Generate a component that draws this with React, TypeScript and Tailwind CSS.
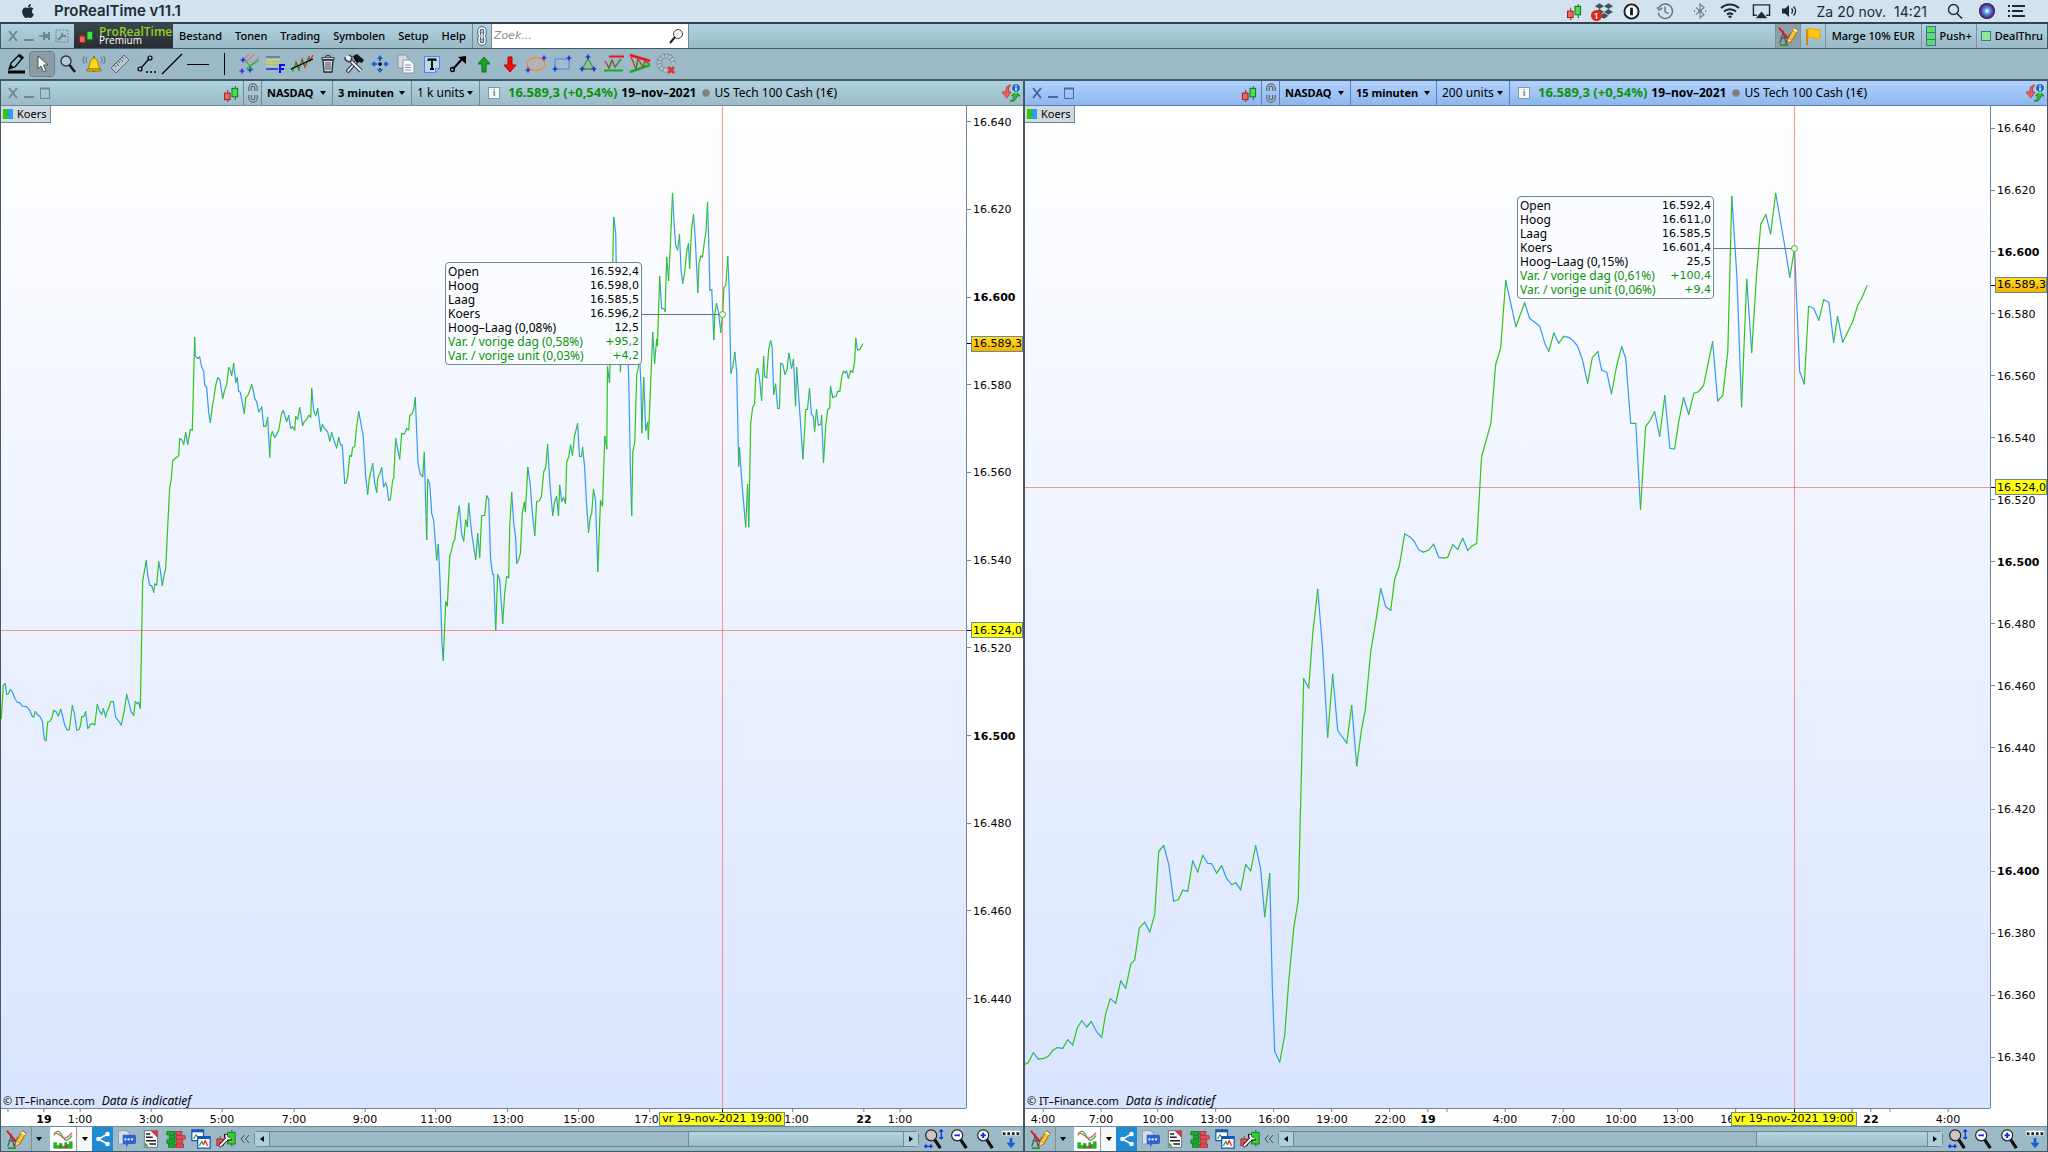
import type { ReactNode } from 'react';
import { FaApple, FaDropbox } from 'react-icons/fa';

// ---------- types ----------

type Block = { x: number; y: number; sx: number; sy: number; ticks: string };

type Scale = { max: number; min: number };

type TimeTick = { x: number; label?: string; bold?: boolean };

type InfoRow = { label: string; value: string; up?: boolean };

type ChartConfig = {
  id: string;
  active: boolean;
  titleGap: string;
  period: string;
  periodWidth: string;
  units: string;
  unitsWidth: string;
  scale: Scale;
  prices: number[];
  times: TimeTick[];
  blocks: Block[];
  cursor: { x: number; y: number };
  info: InfoRow[];
  scrollBefore: number;
  scrollThumb: number;
};

const PLOT_W = 965;
const PLOT_H = 1002;
const LAST_PRICE = 589.3;
const CURSOR_PRICE = 524;

// ---------- data ----------

const NASDAQ_3M: Block[] = [
  {
    x: -1,
    y: 214,
    sx: 3,
    sy: 3,
    ticks:
      '4,1195 10,1096 16,1091 20,1123 25,1121 31,1109 38,1118 45,1136 52,1147 59,1148 66,1158 80,1160 90,1172 96,1188 101,1191 106,1175 112,1183 120,1190 127,1203 133,1257 138,1262 143,1207 150,1203 155,1196 161,1171 169,1176 175,1188 182,1168 188,1190 194,1215 202,1230 208,1230 217,1157 223,1178 230,1230 236,1230 241,1219 245,1190 251,1190 257,1175 263,1225 268,1221 271,1213 278,1211 284,1215 292,1154 298,1172 305,1183 310,1166 317,1191 320,1176 326,1165 332,1145 340,1145 347,1192 355,1202 364,1215 373,1171 380,1124 387,1150 393,1174 401,1186 406,1145 412,1151 416,1147 421,1165 428,782 439,722 443,766 449,796 455,797 461,817 464,792 470,795 476,725 481,750 487,796 492,766 497,745 503,620 509,502 514,477 518,423 524,416 536,407 539,356 545,359 551,373 557,338 563,373 571,329 577,330 584,53 586,109 593,115 599,111 605,141 611,154 614,194 620,203 626,278 631,307 638,252 641,237 647,196 653,173 659,178 662,195 668,235 674,210 680,194 686,143 691,149 695,166 701,131 707,187 712,173 716,214 721,217 727,248 733,280 737,233 743,227 749,212 755,194 761,216 764,236 770,245 776,276 785,261 791,319 797,319 803,293 809,411 812,352 817,335 824,352 830,343 836,330 845,279 850,272 860,304 866,287 872,325 878,321 884,330 887,290 893,298 899,263 908,316 914,304 920,298 926,286 932,291 935,206 941,272 947,287 953,266 962,334 967,314 976,328 983,336 989,363 995,338 1003,364 1010,384 1016,353 1022,375 1027,375 1034,490 1038,489 1043,470 1049,407 1054,409 1058,382 1064,380 1070,318 1076,275 1083,312 1090,350 1097,470 1103,523 1108,475 1118,431 1124,490 1130,517 1133,475 1139,462 1145,443 1151,500 1157,489 1161,500 1166,541 1171,539 1178,480 1181,475 1187,356 1193,388 1199,417 1205,340 1213,342 1220,326 1226,329 1229,287 1236,281 1241,268 1246,233 1254,430 1261,463 1268,470 1273,398 1280,658 1283,478 1289,490 1295,580 1301,602 1310,720 1315,673 1320,780 1326,970 1330,1021 1337,846 1342,857 1349,709 1355,690 1359,668 1364,660 1370,610 1378,558 1385,643 1391,663 1397,600 1402,619 1406,550 1415,640 1427,718 1433,641 1439,712 1445,587 1454,586 1460,527 1466,538 1472,722 1478,763 1481,764 1487,931 1493,764 1499,779 1508,910 1514,820 1520,770 1526,773 1529,620 1535,518 1541,610 1547,655 1550,730 1555,722',
  },
  {
    x: 419,
    y: 74,
    sx: 2.57,
    sy: 3,
    ticks:
      '258,1120 263,1000 268,967 271,995 277,862 283,910 289,1005 295,1066 300,964 306,963 312,950 318,876 323,862 328,794 334,915 341,1006 346,965 351,950 356,1006 359,916 364,964 369,953 374,970 377,846 382,832 387,795 392,826 397,768 405,731 410,829 415,829 418,802 423,860 428,968 433,1057 438,1010 441,1003 446,928 451,960 457,1174 464,962 469,978 475,769 480,806 482,560 487,607 490,500 498,112 503,160 505,300 511,400 515,575 522,390 533,480 537,620 541,880 544,1006 547,815 552,785 557,585 565,540 568,620 570,758 575,593 580,750 585,728 587,778 593,610 598,458 603,550 608,478 610,497 616,290 621,385 627,386 630,394 634,232 639,301 644,180 649,40 653,130 657,195 662,210 667,164 671,270 675,310 680,280 686,210 690,191 693,265 698,145 703,103 708,190 714,337 717,250 722,228 726,231 731,185 735,155 739,67 742,180 745,331 750,329 755,478 758,400 762,371 767,395 773,457 776,420 778,404 781,322 786,316 791,230 795,340 799,579 804,560 809,517 814,575 819,858 821,803 828,920 837,1040 842,914 845,1040 850,730 855,681 860,671 863,583 868,565 873,600 878,661 883,530 886,590 891,593 896,510 901,482 905,500 909,643 914,612 919,685 924,685 927,550 932,552 938,583 943,570 948,520 955,565 960,538 965,677 968,563 975,680 984,836 989,740 991,689 996,688 1001,626 1006,703 1011,710 1014,754 1019,689 1024,736 1030,733 1032,706 1037,847 1043,735 1048,688 1053,685 1055,619 1061,653 1070,648 1073,634 1079,634 1084,590 1088,574 1093,578 1096,573 1101,595 1107,572 1112,577 1117,545 1120,476 1124,509 1130,509 1138,492',
  },
];

const NASDAQ_15M: Block[] = [
  {
    x: -5,
    y: 354,
    sx: 3,
    sy: 2.529,
    ticks:
      '15,1528 25,1524 40,1499 55,1515 73,1513 85,1508 98,1493 112,1486 128,1488 143,1466 158,1480 172,1436 185,1418 200,1434 214,1420 230,1446 245,1460 257,1400 271,1362 287,1374 302,1317 317,1336 332,1275 344,1264 358,1183 374,1169 389,1194 404,1150 416,990 431,975 446,1022 461,1116 475,1112 488,1088 503,1091 518,1014 533,1042 548,1000 563,1020 575,1021 590,1045 605,1026 620,1059 635,1074 647,1069 662,1087 677,1023 692,1039 707,975 722,1035 734,1155 749,1046 757,1330 764,1496 779,1523 794,1455 806,1320 821,1185 835,1112 851,553 866,577 878,440 893,327 908,480 923,701 938,542 953,684 980,716 995,621 1010,774 1024,685 1036,632 1052,485 1068,405 1082,325 1097,371 1112,380 1124,301 1138,268 1154,187 1169,194 1183,206 1196,227 1210,233 1226,228 1241,213 1256,246 1270,248 1283,246 1298,214 1313,226 1328,198 1343,228 1357,217 1370,211 1384,2',
  },
  {
    x: 455,
    y: 74,
    sx: 2.76,
    sy: 3,
    ticks:
      '5,828 30,730 43,555 57,503 71,301 99,440 123,368 137,415 165,439 179,491 190,514 204,459 217,490 231,469 245,472 257,482 269,498 283,540 297,610 310,533 325,515 336,571 350,577 363,642 377,558 391,500 402,535 416,730 430,730 443,988 457,739 470,721 482,695 496,769 510,647 524,805 537,807 548,727 562,653 576,703 590,640 603,635 617,616 642,485 656,663 670,646 684,515 695,49 709,290 722,680 736,298 750,517 763,290 775,132 789,104 802,162 816,40 842,204 855,292 868,207 882,574 895,612 907,379 921,385 935,421 949,359 963,367 976,487 987,410 1001,487 1028,426 1043,375 1054,354 1068,317',
  },
];

const CHARTS: ChartConfig[] = [
  {
    id: 'left',
    active: false,
    titleGap: 'ml-[172px]',
    period: '3 minuten',
    periodWidth: 'w-[79px]',
    units: '1 k units',
    unitsWidth: 'w-[68px]',
    scale: { max: 643.56, min: 415.05 },
    prices: [640, 620, 600, 580, 560, 540, 520, 500, 480, 460, 440],
    times: [
      { x: 7 },
      { x: 43, label: '19', bold: true },
      { x: 79, label: '1:00' },
      { x: 150, label: '3:00' },
      { x: 221, label: '5:00' },
      { x: 293, label: '7:00' },
      { x: 364, label: '9:00' },
      { x: 435, label: '11:00' },
      { x: 507, label: '13:00' },
      { x: 578, label: '15:00' },
      { x: 649, label: '17:00' },
      { x: 792, label: '21:00' },
      { x: 863, label: '22', bold: true },
      { x: 899, label: '1:00' },
    ],
    blocks: NASDAQ_3M,
    cursor: { x: 721, y: 208 },
    info: [
      { label: 'Open', value: '16.592,4' },
      { label: 'Hoog', value: '16.598,0' },
      { label: 'Laag', value: '16.585,5' },
      { label: 'Koers', value: '16.596,2' },
      { label: 'Hoog–Laag (0,08%)', value: '12,5' },
      { label: 'Var. / vorige dag (0,58%)', value: '+95,2', up: true },
      { label: 'Var. / vorige unit (0,03%)', value: '+4,2', up: true },
    ],
    scrollBefore: 66,
    scrollThumb: 34,
  },
  {
    id: 'right',
    active: true,
    titleGap: 'ml-[166px]',
    period: '15 minuten',
    periodWidth: 'w-[86px]',
    units: '200 units',
    unitsWidth: 'w-[73px]',
    scale: { max: 647.14, min: 323.6 },
    prices: [640, 620, 600, 580, 560, 540, 520, 500, 480, 460, 440, 420, 400, 380, 360, 340],
    times: [
      { x: 18, label: '4:00' },
      { x: 76, label: '7:00' },
      { x: 133, label: '10:00' },
      { x: 191, label: '13:00' },
      { x: 249, label: '16:00' },
      { x: 307, label: '19:00' },
      { x: 365, label: '22:00' },
      { x: 403, label: '19', bold: true },
      { x: 422 },
      { x: 480, label: '4:00' },
      { x: 538, label: '7:00' },
      { x: 596, label: '10:00' },
      { x: 653, label: '13:00' },
      { x: 711, label: '16:00' },
      { x: 827 },
      { x: 846, label: '22', bold: true },
      { x: 865 },
      { x: 923, label: '4:00' },
    ],
    blocks: NASDAQ_15M,
    cursor: { x: 769, y: 142 },
    info: [
      { label: 'Open', value: '16.592,4' },
      { label: 'Hoog', value: '16.611,0' },
      { label: 'Laag', value: '16.585,5' },
      { label: 'Koers', value: '16.601,4' },
      { label: 'Hoog–Laag (0,15%)', value: '25,5' },
      { label: 'Var. / vorige dag (0,61%)', value: '+100,4', up: true },
      { label: 'Var. / vorige unit (0,06%)', value: '+9,4', up: true },
    ],
    scrollBefore: 73,
    scrollThumb: 27,
  },
];

// ---------- helpers ----------

function toPoints(blocks: Block[]) {
  return blocks.flatMap((b) =>
    b.ticks.split(' ').map((tick) => {
      const [x, y] = tick.split(',').map(Number);
      return { x: b.x + x / b.sx, y: b.y + y / b.sy };
    })
  );
}

// Rising segments and falling segments get their own path
function toPaths(blocks: Block[]) {
  const pts = toPoints(blocks);
  let up = '';
  let down = '';
  for (let i = 1; i < pts.length; i++) {
    const a = pts[i - 1];
    const b = pts[i];
    const seg = `M${a.x.toFixed(1)} ${a.y.toFixed(1)}L${b.x.toFixed(1)} ${b.y.toFixed(1)}`;
    if (b.y <= a.y) up += seg;
    else down += seg;
  }
  return { up, down };
}

const priceTop = (scale: Scale, value: number) => `${((scale.max - value) / (scale.max - scale.min)) * 100}%`;
const timeLeft = (x: number) => `${(x / PLOT_W) * 100}%`;

// ---------- icons ----------

function Icon({ children, size = 24, box = 24 }: { children: ReactNode; size?: number; box?: number }) {
  return (
    <svg width={size} height={size} viewBox={`0 0 ${box} ${box}`} fill="none" className="shrink-0" aria-hidden="true">
      {children}
    </svg>
  );
}

function Candles({ size = 18 }: { size?: number }) {
  return (
    <Icon size={size} box={18}>
      <path d="M5 5v13" stroke="#a01c1c" />
      <rect x="1.5" y="8.500" width="6" height="7" fill="#ee6666" stroke="#a01c1c" />
      <path d="M13 1v15" stroke="#0c6b1c" />
      <rect x="9.500" y="3.500" width="6" height="9" fill="#4be04b" stroke="#0c6b1c" />
    </Icon>
  );
}

function Chain({ open }: { open?: boolean }) {
  return (
    <svg width="12" height="20" viewBox="0 0 12 20" fill="none" aria-hidden="true">
      <path d={open ? 'M3 8V5a3 3 0 0 1 6 0v3' : 'M3 7V5a3 3 0 0 1 6 0v2a3 3 0 0 1-6 0z'} stroke="#4b5d69" strokeWidth="3.500" />
      <path d={open ? 'M3 12v3a3 3 0 0 0 6 0v-3' : 'M3 13v2a3 3 0 0 0 6 0v-2a3 3 0 0 0-6 0z'} stroke="#4b5d69" strokeWidth="3.500" />
      <path d={open ? 'M3 8V5a3 3 0 0 1 6 0v3' : 'M3 7V5a3 3 0 0 1 6 0v2a3 3 0 0 1-6 0z'} stroke={open ? '#a9b9c2' : '#fff'} strokeWidth="1.500" />
      <path d={open ? 'M3 12v3a3 3 0 0 0 6 0v-3' : 'M3 13v2a3 3 0 0 0 6 0v-2a3 3 0 0 0-6 0z'} stroke={open ? '#a9b9c2' : '#fff'} strokeWidth="1.500" />
      {!open && <path d="M6 6v8" stroke="#4b5d69" strokeWidth="3" />}
      {!open && <path d="M6 6.500v7" stroke="#fff" strokeWidth="1.500" />}
    </svg>
  );
}

function Caret() {
  return (
    <svg width="6" height="4" viewBox="0 0 6 4" aria-hidden="true">
      <path d="M0 0h6L3 4z" fill="#000" />
    </svg>
  );
}

function DrawIcon() {
  return (
    <Icon size={22}>
      <path d="M3 22h9" stroke="#19a32a" strokeWidth="2" />
      <path d="M3 20 7 8l3 12 4-10M4 14h8" stroke="#4a5560" strokeWidth="1.300" />
      <path d="m2 3 11 13" stroke="#e01414" strokeWidth="2" />
      <path d="m11 20 1.500-6L19 3l4 2.300L16.500 17z" fill="#fbc42d" stroke="#9b6a12" />
      <path d="m12.500 14 4 3L11 20z" fill="#f8e3b6" stroke="#9b6a12" strokeWidth=".7" />
      <path d="m18 4.500 4 2.500" stroke="#fff" strokeWidth="1.500" />
    </Icon>
  );
}

function Cross({ points }: { points: [number, number][] }) {
  return <path d={points.map(([x, y]) => `M${x - 2.5} ${y}h5M${x} ${y - 2.5}v5`).join('')} stroke="#0a12e6" strokeWidth="1.200" />;
}

function WindowControls({ color, full }: { color: string; full?: boolean }) {
  return (
    <div className={`flex items-center gap-1 pl-1.5 ${color}`}>
      <button type="button" aria-label="Sluiten">
        <Icon size={12} box={12}>
          <path d="m2 1 8 10M10 1 2 11" stroke="currentColor" strokeWidth="2" />
        </Icon>
      </button>
      <button type="button" aria-label="Minimaliseren">
        <Icon size={12} box={12}>
          <path d="M1 10h10" stroke="currentColor" strokeWidth="2" />
        </Icon>
      </button>
      {full ? (
        <>
          <button type="button" aria-label="Vastzetten">
            <Icon size={12} box={12}>
              <path d="M0 6h5" stroke="currentColor" strokeWidth="1.500" />
              <path d="M4 2h2v2h3V2h2v8H9V8H6v2H4z" fill="currentColor" />
            </Icon>
          </button>
          <button type="button" aria-label="Voorkeuren">
            <Icon size={14} box={14}>
              <rect x="1" y="1" width="12" height="12" stroke="currentColor" strokeDasharray="2 1" />
              <path d="m3 11 5-5" stroke="currentColor" strokeWidth="2" />
              <path d="M7 4a2.500 2.500 0 0 0 4 2.500" stroke="currentColor" strokeWidth="2" />
            </Icon>
          </button>
        </>
      ) : (
        <button type="button" aria-label="Maximaliseren">
          <Icon size={12} box={12}>
            <path d="M1.500 11.500v-10h9v10z" stroke="currentColor" />
            <path d="M1 1.500h10" stroke="currentColor" strokeWidth="2" />
          </Icon>
        </button>
      )}
    </div>
  );
}

// ---------- drawing toolbar ----------

const TOOLS: { name: string; selected?: boolean; icon: ReactNode }[] = [
  {
    name: 'Potlood',
    icon: (
      <>
        <path d="m5 17 2-6 8-8 3.500 3L11 15z" stroke="#000" strokeWidth="1.300" />
        <path d="m14 4 2-2 4 3.500-2 2z" fill="#000" />
        <path d="M5 17 6.500 12.500 10 15z" fill="#000" />
        <path d="M4 20h17" stroke="#000" strokeWidth="3" />
      </>
    ),
  },
  {
    name: 'Cursor',
    selected: true,
    icon: <path d="M8 4v13l3-3 2.500 6 2.500-1-2.500-6H18z" fill="#fff" stroke="#4d4d4d" />,
  },
  {
    name: 'Zoom',
    icon: (
      <>
        <circle cx="10" cy="9" r="5" fill="#b9ccd6" stroke="#2b3338" strokeWidth="1.300" />
        <path d="m13.500 13 5.500 7" stroke="#14191c" strokeWidth="2.500" />
      </>
    ),
  },
  {
    name: 'Alarm',
    icon: (
      <>
        <path d="M6 17c2-2 1-10 6-11 5 1 4 9 6 11z" fill="#ffd61c" stroke="#9b7900" />
        <path d="M5 17h14v2H5zM10 19.500h4" fill="#f3c300" stroke="#9b7900" />
        <path d="M12 4v2" stroke="#9b7900" strokeWidth="2" />
        <path d="M5 5c-1.500 2-1.500 4 0 6M2.500 4c-2 3-2 5 0 8M19 5c1.500 2 1.500 4 0 6M21.500 4c2 3 2 5 0 8" stroke="#4b5a63" strokeWidth=".8" />
      </>
    ),
  },
  {
    name: 'Meetlat',
    icon: (
      <>
        <path d="m3 16 13-13 5 5L8 21z" fill="#b7c6ce" stroke="#5b6a73" />
        <path d="m6 13 2 2M8 11l3 3M10 9l2 2M12 7l3 3M14 5l2 2" stroke="#5b6a73" />
      </>
    ),
  },
  {
    name: 'Segment',
    icon: (
      <>
        <path d="M7 16 15 7" stroke="#000" strokeWidth="1.200" />
        <circle cx="16" cy="6" r="2" stroke="#000" strokeWidth="1.200" />
        <circle cx="6" cy="17" r="2" stroke="#000" strokeWidth="1.200" />
        <path d="M12 20h2M16 20h2M20 20h2" stroke="#000" strokeWidth="1.500" />
      </>
    ),
  },
  { name: 'Lijn', icon: <path d="M2 22 22 2" stroke="#000" strokeWidth="1.300" /> },
  { name: 'Horizontale lijn', icon: <path d="M1 12.500h22" stroke="#000" /> },
  { name: 'Verticale lijn', icon: <path d="M12.500 1v22" stroke="#000" /> },
  {
    name: 'Kanaal',
    icon: (
      <>
        <path d="M4 8 10 2h8L6 15z" fill="#a9b3b8" />
        <path d="M4 9 11 2M8 10 17 2M12 14 21 5" stroke="#e05f68" />
        <path d="M7 8l8 10M8 17 21 8" stroke="#1fb52c" strokeWidth="1.200" />
        <Cross points={[[5, 8], [4, 19], [12, 18]]} />
      </>
    ),
  },
  {
    name: 'Fibonacci',
    icon: (
      <>
        <path d="M2 5h14" stroke="#3c4a9a" />
        <path d="M2 8h14" stroke="#e8d642" strokeWidth="1.500" />
        <path d="M2 11h14M2 14h11" stroke="#e8d642" strokeWidth="1.500" strokeDasharray="3 1" />
        <path d="M2 17h12" stroke="#3c4ae0" strokeWidth="2" />
        <path d="M16 21v-8h5M16 17h4" stroke="#0a12e6" strokeWidth="2" />
      </>
    ),
  },
  {
    name: 'Regressie',
    icon: (
      <>
        <path d="m1 17 2 2 3-9 3 8 3-11 2 6" stroke="#15a822" strokeWidth="1.200" />
        <path d="m6 10 3 8M12 7l3 8 4-10 1 4 3-6" stroke="#d42626" strokeWidth="1.200" />
        <path d="m15 15 4-11" stroke="#15a822" />
        <path d="M1 17 23 7" stroke="#000" strokeWidth="1.300" />
      </>
    ),
  },
  {
    name: 'Verwijderen',
    icon: (
      <>
        <path d="M7 8h10l-1 12H8z" fill="#d7dbdd" stroke="#22282b" strokeWidth="1.300" />
        <path d="M5.500 6.500h13" stroke="#22282b" strokeWidth="2.500" />
        <path d="M6.500 6.500h11" stroke="#d7dbdd" />
        <path d="M9.500 5c0-2 5-2 5 0" stroke="#22282b" />
        <path d="M10 10v8M12 10v8M14 10v8" stroke="#22282b" strokeWidth=".8" />
      </>
    ),
  },
  {
    name: 'Instellingen',
    icon: (
      <>
        <path d="m5 20 11-12" stroke="#2b3338" strokeWidth="4" />
        <path d="m5.500 19.500 9-10" stroke="#f2f5f7" strokeWidth="1.800" />
        <path d="m11 4 4-2 7 6-2 3-3-1-2 1-3-4z" fill="#111" />
        <path d="m7 7 12 12" stroke="#39434a" strokeWidth="4" />
        <path d="m7 7 12 12" stroke="#f2f5f7" strokeWidth="2" />
        <path d="M3 5a4 4 0 0 0 6 4l1-4-3-2" stroke="#39434a" strokeWidth="1.500" fill="#e6ebee" />
      </>
    ),
  },
  {
    name: 'Verplaatsen',
    icon: (
      <>
        <path d="m12 3 3 4H9zM12 21l3-4H9zM3 12l4-3v6zM21 12l-4-3v6z" fill="#1862d0" />
        <path d="M12 6v12M6 12h12" stroke="#1862d0" strokeDasharray="3 2" strokeWidth="2" />
        <circle cx="12" cy="12" r="1.800" fill="#000" />
      </>
    ),
  },
  {
    name: 'Kopiëren',
    icon: (
      <>
        <path d="M4 3h7l3 3v10H4z" fill="#d3dde3" stroke="#8797a1" />
        <path d="M9 8h7l4 4v9H9z" fill="#f7f9fa" stroke="#8797a1" />
        <path d="M11 13h6M11 15.500h6M11 18h6" stroke="#8797a1" />
      </>
    ),
  },
  {
    name: 'Tekst',
    icon: (
      <>
        <path d="M5 4.500h14.500v12l-4 4H4.500V4.500z" fill="#c2d6ea" stroke="#4b86ee" />
        <path d="M19.500 16.500h-4v4" stroke="#4b86ee" />
        <path d="M8.500 9V7.500h7V9M12 7.500V17M10 17h4" stroke="#000" strokeWidth="1.800" />
      </>
    ),
  },
  {
    name: 'Pijl',
    icon: (
      <>
        <path d="M7 17 17 6" stroke="#000" strokeWidth="2" />
        <path d="M20 4v8l-8-7z" fill="#000" />
        <circle cx="6.500" cy="17.500" r="2" stroke="#000" strokeWidth="1.300" />
      </>
    ),
  },
  { name: 'Pijl omhoog', icon: <path d="m12 5 6 7h-4v8h-4v-8H6z" fill="#17a81f" stroke="#0d6e14" /> },
  { name: 'Pijl omlaag', icon: <path d="m12 20 6-7h-4V5h-4v8H6z" fill="#f20d0d" stroke="#b00" /> },
  {
    name: 'Ellips',
    icon: (
      <>
        <ellipse cx="12" cy="12" rx="9" ry="6.500" fill="#adb5b8" stroke="#f08a55" strokeWidth="1.500" />
        <Cross points={[[20, 6], [4, 18]]} />
      </>
    ),
  },
  {
    name: 'Rechthoek',
    icon: (
      <>
        <path d="M5 7h14v10H5z" fill="#a3bbd0" stroke="#4f82ea" />
        <Cross points={[[19, 6], [5, 17]]} />
      </>
    ),
  },
  {
    name: 'Driehoek',
    icon: (
      <>
        <path d="M12 7 18 17H6z" fill="#a7b5ad" stroke="#27a333" strokeWidth="1.300" />
        <Cross points={[[12, 5], [6, 17], [18, 17]]} />
      </>
    ),
  },
  {
    name: 'Steun en weerstand',
    icon: (
      <>
        <path d="M7 4.500h15" stroke="#f01414" strokeWidth="2" />
        <path d="M2 18.500h19" stroke="#12b01c" strokeWidth="2" />
        <path d="m3 9 4 7 3-8 3 7 6-8" stroke="#e02020" strokeWidth="1.200" />
        <path d="m7 16 3-8M13 15l6-8" stroke="#12a01c" strokeWidth="1.200" />
      </>
    ),
  },
  {
    name: 'Driehoekspatroon',
    icon: (
      <>
        <path d="M2 3 22 9" stroke="#f01414" strokeWidth="2.500" />
        <path d="m2 20 20-7" stroke="#12b01c" strokeWidth="2.500" />
        <path d="m3 5 5 12 2-10 5 8 2-6 4 3" stroke="#e02020" strokeWidth="1.200" />
        <path d="m8 17 2-10M15 15l2-6" stroke="#12a01c" strokeWidth="1.200" />
      </>
    ),
  },
  {
    name: 'Objecten wissen',
    icon: (
      <>
        <path d="M12 18a7 7 0 1 1 7-6" stroke="#7c8b94" strokeWidth="5" />
        <path d="M12 18a7 7 0 1 1 7-6" stroke="#b3c6d0" strokeWidth="3.500" strokeDasharray="2.500 1" />
        <path d="m14 15 6 6M20 15l-6 6" stroke="#d93636" strokeWidth="3" />
      </>
    ),
  },
];

function DrawingToolbar() {
  return (
    <div className="flex h-8 shrink-0 items-center border-b-2 border-[#435866] bg-[#9bb9c7] pl-[3px]" role="toolbar" aria-label="Tekenen">
      {TOOLS.map((tool) => (
        <button
          key={tool.name}
          type="button"
          aria-label={tool.name}
          className={`flex h-[26px] w-[26px] items-center justify-center rounded-sm border ${
            tool.selected ? 'border-[#6f838f] bg-[#8b9ca6]' : 'border-transparent'
          }`}
        >
          <Icon>{tool.icon}</Icon>
        </button>
      ))}
    </div>
  );
}

// ---------- top bars ----------

function SystemBar() {
  return (
    <header className="flex h-6 shrink-0 items-center border-b-2 border-[#34424f] bg-[#d2e2ee] pl-5 pr-[23px] font-['Inter',sans-serif] text-[#1c2b36]">
      <FaApple size={16} />
      <span className="ml-[18px] text-[15px] font-semibold">ProRealTime v11.1</span>
      <div className="ml-auto flex items-center">
        <Candles size={17} />
        <span className="relative ml-3 text-[#41535f]">
          <FaDropbox size={18} />
          <span className="absolute -left-1 top-2 flex h-[11px] w-[11px] items-center justify-center rounded-full bg-[#e0261b] text-[8px] font-bold text-white">1</span>
        </span>
        <span className="ml-2.5 flex">
          <Icon size={17} box={18}>
            <circle cx="9" cy="9" r="7.500" fill="#f4f8fa" stroke="#16222b" strokeWidth="2" />
            <path d="M9 5v8" stroke="#16222b" strokeWidth="3" />
          </Icon>
        </span>
        <span className="ml-4 flex text-[#62727d]">
          <Icon size={18} box={20}>
            <path d="M3 7a8 8 0 1 1-.500 5" stroke="currentColor" strokeWidth="1.500" />
            <path d="m1 6 2.500 3L7 6.500" stroke="currentColor" strokeWidth="1.500" />
            <path d="M10 5v6l4 2" stroke="currentColor" strokeWidth="1.500" />
          </Icon>
        </span>
        <span className="ml-[18px] flex text-[#71828d]">
          <Icon size={16} box={16}>
            <path d="m4 4.500 8 7L8 15V1l4 3.500-8 7" stroke="currentColor" strokeWidth="1.200" />
            <path d="M2 8h1M6 8h1M9 8h1M13 8h1" stroke="currentColor" strokeWidth="2" />
          </Icon>
        </span>
        <span className="ml-3 flex">
          <Icon size={20} box={20}>
            <path d="M1 7a13 13 0 0 1 18 0M4 10.500a9 9 0 0 1 12 0M7 13.500a5 5 0 0 1 6 0" stroke="currentColor" strokeWidth="2" />
            <path d="m8 15.500 2 2 2-2a3 3 0 0 0-4 0z" fill="currentColor" />
          </Icon>
        </span>
        <span className="ml-3 flex">
          <Icon size={19} box={20}>
            <path d="M5 14H1.500V3h17v11H15" stroke="currentColor" strokeWidth="1.500" />
            <path d="m10 10 6 7H4z" fill="currentColor" />
          </Icon>
        </span>
        <span className="ml-2.5 flex">
          <Icon size={16} box={16}>
            <path d="M1 5.500h3L8 2v12l-4-3.500H1z" fill="currentColor" />
            <path d="M10.500 5.500a3.500 3.500 0 0 1 0 5M12.500 3.500a6 6 0 0 1 0 9" stroke="currentColor" strokeWidth="1.300" />
          </Icon>
        </span>
        <span className="ml-5 whitespace-pre text-[14px]">Za 20 nov.  14:21</span>
        <button type="button" aria-label="Spotlight" className="ml-5">
          <Icon size={16} box={16}>
            <circle cx="6.500" cy="6.500" r="5" stroke="currentColor" strokeWidth="1.400" />
            <path d="m10 10.500 5 5" stroke="currentColor" strokeWidth="1.600" />
          </Icon>
        </button>
        <span className="ml-4 h-4 w-4 rounded-full bg-[radial-gradient(circle,#f4f8ff_5%,#4aa5e8_25%,#6a3fb0_50%,#151a3a_70%)]" />
        <button type="button" aria-label="Berichtencentrum" className="ml-3">
          <Icon size={18} box={18}>
            <path d="M1 4h2M1 9h2M1 14h2M5 4h13M5 9h11M5 14h13" stroke="currentColor" strokeWidth="2" />
          </Icon>
        </button>
      </div>
    </header>
  );
}

const MENU = ['Bestand', 'Tonen', 'Trading', 'Symbolen', 'Setup', 'Help'];

function MenuBar() {
  return (
    <div className="flex h-[25px] shrink-0 items-stretch border-b border-x border-[#435866] bg-linear-to-b from-[#b0d3df] to-[#9bbac7]">
      <WindowControls color="text-[#71858f]" full />
      <div className="ml-[5px] flex w-[99px] items-center gap-1 bg-linear-to-b from-[#3c454c] to-[#272d32] pl-1">
        <Candles size={17} />
        <div className="font-['Open_Sans',sans-serif] leading-[9px]">
          <p className="text-[12px] font-semibold text-[#8fd129]">ProRealTime</p>
          <p className="text-[10px] text-white">Premium</p>
        </div>
      </div>
      <nav className="flex items-center gap-[13px] px-1.5 font-['Noto_Sans',sans-serif] text-[11px] font-medium">
        {MENU.map((item) => (
          <button key={item} type="button">
            {item}
          </button>
        ))}
      </nav>
      <button type="button" aria-label="Koppelen" className="flex w-[19px] items-center justify-center border-l border-[#6f8896]">
        <Chain />
      </button>
      <label className="flex w-[198px] items-center border-x border-[#6f8896] bg-white pl-0.5 pr-1">
        <input
          type="search"
          aria-label="Zoek"
          placeholder="Zoek..."
          className="min-w-0 flex-1 bg-transparent text-[11px] italic outline-none placeholder:text-[#8c8c8c]"
        />
        <Icon size={16} box={16}>
          <circle cx="10" cy="6" r="4.500" fill="#eef0f2" stroke="#444" />
          <path d="m7 9-5 6" stroke="#222" strokeWidth="2" />
        </Icon>
      </label>
      <div className="ml-auto flex items-stretch font-['Noto_Sans',sans-serif] text-[11px] font-medium">
        <button type="button" aria-label="Tekenmodus" className="flex w-[26px] items-center justify-center border-x border-[#7c919d] bg-[#8d9fa9]">
          <DrawIcon />
        </button>
        <button type="button" aria-label="Markering" className="flex w-6 items-center justify-center">
          <Icon size={18} box={18}>
            <path d="M3 2v16" stroke="#c58a00" strokeWidth="2" />
            <path d="M4 2c4-2 6 2 12 0v9c-5 2-8-2-12 0z" fill="#ffc414" stroke="#e6a400" />
          </Icon>
        </button>
        <button type="button" className="border-l border-[#7c919d] px-1.5">
          Marge 10% EUR
        </button>
        <button type="button" className="flex items-center gap-1 border-l border-[#7c919d] px-1">
          <span className="flex h-5 w-2.5 flex-col justify-between divide-y divide-[#3d6fb0] border border-[#3d6fb0] bg-[#5fdf5f]">
            <span className="flex-1" />
            <span className="flex-1" />
            <span className="flex-1" />
          </span>
          Push+
        </button>
        <button type="button" className="flex items-center gap-1 border-l border-[#7c919d] px-1">
          <span className="h-2.5 w-2.5 border border-[#3d6fb0] bg-[#8eea8e]" />
          DealThru
        </button>
      </div>
    </div>
  );
}

// ---------- chart window ----------

function BarSelect({ label, value, width, line, bold }: { label: string; value: string; width: string; line: string; bold?: boolean }) {
  return (
    <label className={`relative flex items-center border-l ${line} ${width}`}>
      <select
        aria-label={label}
        defaultValue={value}
        className={`h-full w-full appearance-none bg-transparent pl-[5px] font-['Noto_Sans',sans-serif] ${bold ? 'text-[11px] font-bold' : 'text-[12px]'}`}
      >
        <option>{value}</option>
      </select>
      <span className="pointer-events-none absolute right-1.5 top-2.5">
        <Caret />
      </span>
    </label>
  );
}

function TitleBar({ chart }: { chart: ChartConfig }) {
  const line = chart.active ? 'border-[#5b7fb3]' : 'border-[#6f8896]';
  return (
    <div
      className={`flex h-[25px] shrink-0 items-stretch border-b ${line} bg-linear-to-b ${
        chart.active ? 'from-[#b1d2ff] to-[#8fb6ea]' : 'from-[#b0d3df] to-[#9bbac7]'
      }`}
    >
      <WindowControls color={chart.active ? 'text-[#4a6a97]' : 'text-[#71858f]'} />
      <span className={`flex w-5 items-center ${chart.titleGap}`}>
        <Candles size={17} />
      </span>
      <button type="button" aria-label="Koppelen" className={`flex w-[18px] items-center justify-center border-l ${line}`}>
        <Chain open />
      </button>
      <BarSelect label="Symbool" value="NASDAQ" width="w-[71px]" line={line} bold />
      <BarSelect label="Periode" value={chart.period} width={chart.periodWidth} line={line} bold />
      <BarSelect label="Aantal units" value={chart.units} width={chart.unitsWidth} line={line} />
      <div className={`flex items-center whitespace-nowrap border-l ${line} pl-2 font-['Noto_Sans',sans-serif] text-[12px]`}>
        <button
          type="button"
          aria-label="Info"
          className="flex h-3 w-3 items-center justify-center border border-[#8797a1] bg-[#f4f7f8] text-[9px] font-bold text-[#71858f]"
        >
          i
        </button>
        <span className="ml-2 text-[13px] font-bold text-[#0b930b]">16.589,3 (+0,54%)</span>
        <span className="ml-1 font-bold">19–nov–2021</span>
        <span className="ml-1.5 h-2 w-2 rounded-full border border-[#8c8c8c] bg-[#808080]" />
        <span className="ml-1 text-[12px]">US Tech 100 Cash (1€)</span>
      </div>
      <button type="button" aria-label="Verversen" className="ml-auto flex items-center pr-0.5">
        <Icon size={20} box={20}>
          <path d="M10 2C6 2 4.500 5 5 9H1l5 6 4-6H7.500C7.500 6 8 4 10 2z" fill="#f06060" stroke="#c92c2c" strokeWidth=".8" />
          <path d="M9 18c4 1 6.500-1 6.500-5H19l-4-5-4.500 5H13c0 3-1 4-4 5z" fill="#2fc430" stroke="#0c7c14" strokeWidth=".8" />
          <circle cx="15" cy="5" r="4.500" fill="#1d6fc4" stroke="#e9f1f8" strokeWidth=".8" />
          <path d="M15 2.200v1.400M15 4.500v3.300" stroke="#fff" strokeWidth="1.500" />
        </Icon>
      </button>
    </div>
  );
}

function InfoBox({ rows }: { rows: InfoRow[] }) {
  return (
    <table className="absolute right-20 -top-[52px] block w-[197px] rounded-sm border border-[#6f8896] bg-[#fafcff]/90 px-0.5 pb-px pt-0.5">
      <tbody className="block">
        {rows.map((row) => (
          <tr key={row.label} className={`flex h-3.5 items-center justify-between whitespace-nowrap text-[11px] ${row.up ? 'text-[#0b930b]' : ''}`}>
            <th scope="row" className="font-['Noto_Sans',sans-serif] text-[12px] font-normal">
              {row.label}
            </th>
            <td>{row.value}</td>
          </tr>
        ))}
      </tbody>
    </table>
  );
}

function Plot({ chart }: { chart: ChartConfig }) {
  const { up, down } = toPaths(chart.blocks);
  return (
    <div className="relative min-w-0 flex-1 overflow-hidden bg-linear-to-b from-white to-[#d9e4ff]">
      <svg className="absolute inset-0 h-full w-full" viewBox={`0 0 ${PLOT_W} ${PLOT_H}`} preserveAspectRatio="none" fill="none" role="img" aria-label="Koersgrafiek">
        <path d={down} stroke="#3399f5" strokeWidth="1.200" strokeLinecap="round" vectorEffect="non-scaling-stroke" />
        <path d={up} stroke="#2fc60f" strokeWidth="1.200" strokeLinecap="round" vectorEffect="non-scaling-stroke" />
      </svg>
      <div className="absolute inset-x-0 h-px bg-[#ff5050]/60" style={{ top: priceTop(chart.scale, CURSOR_PRICE) }} />
      <div className="absolute inset-y-0 w-px bg-[#ff5050]/60" style={{ left: timeLeft(chart.cursor.x) }} />
      <div className="absolute" style={{ left: timeLeft(chart.cursor.x), top: `${(chart.cursor.y / PLOT_H) * 100}%` }}>
        <InfoBox rows={chart.info} />
        <span className="absolute right-0 top-0 h-px w-20 bg-[#5f7683]" />
        <span className="absolute -left-[3px] -top-[3px] h-[7px] w-[7px] rounded-full border border-[#2fc60f] bg-white" />
      </div>
      <div className="relative flex h-full flex-col items-start justify-between">
        <div className="flex h-[17px] items-center gap-0.5 border-b border-r border-[#6f8896] bg-[#ced9e0] px-0.5">
          <span className="h-2.5 w-2.5 bg-[linear-gradient(90deg,#2fc60f_50%,#3399ff_50%)]" />
          <span className="px-0.5 font-['Noto_Sans',sans-serif] text-[11px] leading-4">Koers</span>
        </div>
        <p className="px-0.5 font-['Noto_Sans',sans-serif] text-[11px] leading-[14px]">
          © IT–Finance.com <span className="ml-1 text-[12px] italic">Data is indicatief</span>
        </p>
      </div>
    </div>
  );
}

function PriceTag({ top, text, color }: { top: string; text: string; color: string }) {
  return (
    <div className="absolute left-0 flex w-full -translate-y-1/2 items-center" style={{ top }}>
      <span className="h-px w-1 bg-black" />
      <span className={`flex h-4 flex-1 items-center border border-[#6f8896] pl-px pt-px ${color}`}>{text}</span>
    </div>
  );
}

function PriceAxis({ chart }: { chart: ChartConfig }) {
  return (
    <div className="relative w-[57px] shrink-0 border-l border-[#6f8896] bg-white text-[11px]">
      {chart.prices.map((p) => (
        <div key={p} className="absolute left-0 flex -translate-y-1/2 items-center" style={{ top: priceTop(chart.scale, p) }}>
          <span className="h-px w-1 bg-[#6f8896]" />
          <span className={`pl-0.5 pt-0.5 leading-4 ${p % 100 === 0 ? 'font-bold' : ''}`}>{`16.${p}`}</span>
        </div>
      ))}
      <PriceTag top={priceTop(chart.scale, LAST_PRICE)} text="16.589,3" color="bg-linear-to-b from-[#ffdc1f] to-[#f2b300]" />
      <PriceTag top={priceTop(chart.scale, CURSOR_PRICE)} text="16.524,0" color="bg-[#ffff12]" />
    </div>
  );
}

function TimeAxis({ chart }: { chart: ChartConfig }) {
  return (
    <div className="flex h-[18px] shrink-0 bg-white">
      <div className="relative flex-1 border-t border-[#6f8896] text-[11px]">
        {chart.times.map((t) => (
          <div key={t.x} className="absolute top-0 flex -translate-x-1/2 flex-col items-center" style={{ left: timeLeft(t.x) }}>
            <span className="h-[3px] w-px bg-[#6f8896]" />
            <span className={`pt-px leading-[14px] ${t.bold ? 'font-bold' : ''}`}>{t.label}</span>
          </div>
        ))}
        <div className="absolute top-0 flex -translate-x-1/2 flex-col items-center" style={{ left: timeLeft(chart.cursor.x) }}>
          <span className="h-[3px] w-px bg-black" />
          <span className="flex h-3.5 w-[126px] items-center justify-center whitespace-nowrap border border-[#6f8896] bg-[#ffff12]">
            vr 19-nov-2021 19:00
          </span>
        </div>
      </div>
      <div className="w-[57px] shrink-0" />
    </div>
  );
}

function MagnifierIcon({ sign }: { sign: 'fit' | 'in' | 'out' }) {
  return (
    <Icon size={22}>
      <circle cx="10" cy="8" r="6" fill={sign === 'fit' ? '#c9c5c0' : '#fff'} stroke="#222" strokeWidth="1.300" />
      <path d="m14 13 6 9" stroke="#111" strokeWidth="3.500" />
      {sign === 'fit' && (
        <path d="M21 2v10M19 4l2-2 2 2M19 10l2 2 2-2M3 20h8M5 18l-2 2 2 2M9 18l2 2-2 2" stroke="#0a2be6" strokeWidth="1.300" />
      )}
      {sign !== 'fit' && <path d="M7 8h6" stroke="#0a2be6" strokeWidth="2" />}
      {sign === 'in' && <path d="M10 5v6" stroke="#0a2be6" strokeWidth="2" />}
    </Icon>
  );
}

function BottomBar({ chart }: { chart: ChartConfig }) {
  return (
    <div className="flex h-[26px] shrink-0 items-stretch border-y border-[#6f8896] border-b-[#435866] bg-[#9bb9c7]" role="toolbar" aria-label="Grafiek">
      <button type="button" aria-label="Tekenen" className="flex w-[30px] items-center justify-center">
        <DrawIcon />
      </button>
      <button type="button" aria-label="Tekenopties" className="flex w-[15px] items-center justify-center border-l border-[#7c919d]">
        <Caret />
      </button>
      <button type="button" aria-label="Indicatoren" className="ml-1 flex w-[26px] items-center justify-center bg-white">
        <Icon size={22}>
          <path d="M2 8c4-8 7-4 10 2s6 3 10-2" stroke="#15a34a" strokeWidth="1.300" />
          <path d="M2 6c5-2 8 4 11 5s6-3 9-6" stroke="#e05a5a" strokeWidth="1.300" />
          <path d="M2 22v-6h3v3h3v-2h3v3h3v-4h2v2h3v-3h3v7z" fill="#16c01e" stroke="#0c7c14" strokeWidth=".6" />
          <path d="M8 20h3v2H8zM14 19h3v3h-3z" fill="#e02020" />
        </Icon>
      </button>
      <button type="button" aria-label="Indicatoropties" className="flex w-4 items-center justify-center border-l border-[#9a9a9a] bg-[#f4f6f7]">
        <Caret />
      </button>
      <button type="button" aria-label="Delen" className="flex w-[21px] items-center justify-center bg-[#1f8bd6]">
        <Icon size={16} box={16}>
          <path d="M12.500 3 3.500 8l9 5" stroke="#fff" strokeWidth="1.600" />
          <circle cx="12.500" cy="3" r="2.300" fill="#fff" />
          <circle cx="3.500" cy="8" r="2.300" fill="#fff" />
          <circle cx="12.500" cy="13" r="2.300" fill="#fff" />
        </Icon>
      </button>
      <div className="flex items-center gap-[5px] pl-[3px]">
        <button type="button" aria-label="Berichten">
          <Icon size={20}>
            <path d="M3 2h10l3 3v13H3z" fill="#d7e0e6" stroke="#8797a1" />
            <path d="M8 7h14a2 2 0 0 1 2 2v7a2 2 0 0 1-2 2h-7l-3 4v-4H8z" fill="#2f62d0" />
            <path d="M10 12.500h2.500M14 12.500h2.500M18 12.500h2.500" stroke="#fff" strokeWidth="2" />
          </Icon>
        </button>
        <button type="button" aria-label="Nieuws">
          <Icon size={20}>
            <path d="M4 2h16v20H4z" fill="#f4f6f7" stroke="#59666e" />
            <path d="M14 3h5v5z" fill="#e02f3e" stroke="#e02f3e" strokeWidth="2" />
            <path d="M6 6h5M6 10h8M6 14h12M10 18h8" stroke="#222" strokeWidth="1.800" />
            <path d="m5 16 4 5H5z" fill="#19a32a" />
          </Icon>
        </button>
        <button type="button" aria-label="Orderboek">
          <Icon size={20}>
            <path d="M1 3h10v4H1zM4 8h7v4H4zM1 13h10v4H1zM3 18h8v4H3z" fill="#19b32a" stroke="#0c7c14" />
            <path d="M12 3h7v4h-7zM12 8h11v4H12zM12 13h8v4h-8zM12 18h9v4h-9z" fill="#e8505c" stroke="#b0242c" />
          </Icon>
        </button>
        <button type="button" aria-label="Vensters">
          <Icon size={20}>
            <path d="M1 1h14v13H1z" fill="#fff" stroke="#1d56b8" strokeWidth="1.500" />
            <path d="M1 2.500h14" stroke="#1d56b8" strokeWidth="3" />
            <path d="m3 12 3-5 3 4" stroke="#19a32a" strokeWidth="1.300" />
            <path d="M8 9h15v14H8z" fill="#fff" stroke="#1d56b8" strokeWidth="1.500" />
            <path d="M8 10.500h15" stroke="#1d56b8" strokeWidth="3" />
            <path d="m10 20 3-5 2 4" stroke="#19a32a" strokeWidth="1.500" />
            <path d="m15 19 2-5 3 6" stroke="#e02020" strokeWidth="1.500" />
          </Icon>
        </button>
        <button type="button" aria-label="Grafiekinstellingen">
          <Icon size={20}>
            <path d="M5 8v15" stroke="#a01c1c" />
            <path d="M1 12h8v8H1z" fill="#e8505c" stroke="#a01c1c" />
            <path d="M19 1v20" stroke="#0c6b1c" />
            <path d="M14 4h9v14h-9z" fill="#34d134" stroke="#0c6b1c" />
            <path d="m5 20 8-8" stroke="#111" strokeWidth="4.500" />
            <path d="M12 6c-1 5 3 7 6 5" stroke="#111" strokeWidth="4.500" />
            <path d="m5 20 8-8M12.500 7c-1 4 2 5 5 4" stroke="#fff" strokeWidth="2.500" />
          </Icon>
        </button>
      </div>
      <button type="button" aria-label="Inklappen" className="flex w-[18px] items-center justify-center text-[#3c4d58]">
        <Icon size={10} box={10}>
          <path d="M4.500 1 1 5l3.500 4M9 1 5.500 5 9 9" stroke="currentColor" />
        </Icon>
      </button>
      <div className="flex h-4 min-w-0 flex-1 items-stretch self-center rounded-sm border border-[#6f8896] bg-[#9bb9c7]">
        <button type="button" aria-label="Naar links" className="flex w-[15px] items-center justify-center border-r border-[#6f8896] bg-[#b0cfdb]">
          <Icon size={6} box={6}>
            <path d="M5 0v6L1 3z" fill="#000" />
          </Icon>
        </button>
        <div className="flex flex-1">
          <span style={{ width: `${chart.scrollBefore}%` }} />
          <span className="border-l border-[#6f8896] bg-linear-to-b from-[#b4d6e1] to-[#9dbdca]" style={{ width: `${chart.scrollThumb}%` }} />
        </div>
        <button type="button" aria-label="Naar rechts" className="flex w-[15px] items-center justify-center border-l border-[#6f8896] bg-[#b0cfdb]">
          <Icon size={6} box={6}>
            <path d="M1 0v6l4-3z" fill="#000" />
          </Icon>
        </button>
      </div>
      <div className="flex items-center gap-1 pl-[3px] pr-px">
        <button type="button" aria-label="Passend maken">
          <MagnifierIcon sign="fit" />
        </button>
        <button type="button" aria-label="Uitzoomen">
          <MagnifierIcon sign="out" />
        </button>
        <button type="button" aria-label="Inzoomen">
          <MagnifierIcon sign="in" />
        </button>
        <button type="button" aria-label="Naar laatste unit">
          <Icon size={22}>
            <path d="M2 3h20v5H2z" fill="#fff" />
            <path d="M3 6h3M8 6h3M13 6h3M18 6h3" stroke="#222" strokeWidth="3" />
            <path d="M12 11v6" stroke="#1862d0" strokeWidth="3" />
            <path d="M7 16h10l-5 6z" fill="#1862d0" />
          </Icon>
        </button>
      </div>
    </div>
  );
}

function ChartWindow({ chart }: { chart: ChartConfig }) {
  return (
    <section className="flex min-w-0 flex-col border-x border-[#435866]">
      <TitleBar chart={chart} />
      <div className="flex min-h-0 flex-1">
        <Plot chart={chart} />
        <PriceAxis chart={chart} />
      </div>
      <TimeAxis chart={chart} />
      <BottomBar chart={chart} />
    </section>
  );
}

export default function App() {
  return (
    <div className="flex h-screen flex-col overflow-hidden bg-white font-['DejaVu_Sans',sans-serif] text-black">
      <SystemBar />
      <MenuBar />
      <DrawingToolbar />
      <main className="grid min-h-0 flex-1 grid-cols-2">
        {CHARTS.map((chart) => (
          <ChartWindow key={chart.id} chart={chart} />
        ))}
      </main>
    </div>
  );
}
